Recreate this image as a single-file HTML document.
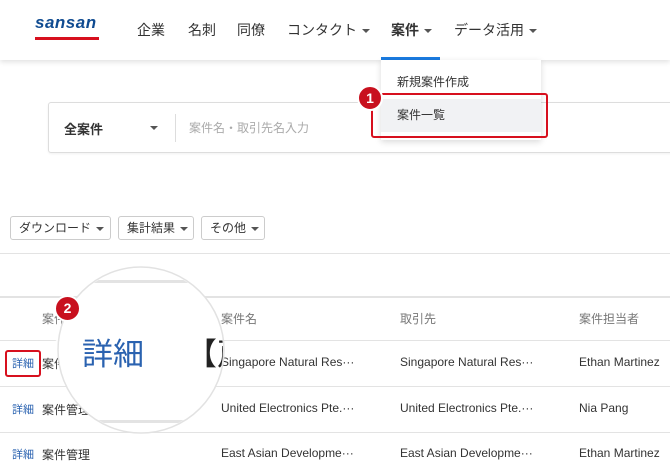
<!DOCTYPE html>
<html><head><meta charset="utf-8"><style>
*{margin:0;padding:0;box-sizing:border-box}
body{width:670px;height:455px;overflow:hidden;background:#fff;font-family:"Liberation Sans","Noto Sans CJK JP",sans-serif;color:#333;position:relative;font-size:12px}
.a{position:absolute;white-space:nowrap}
.hdr{position:absolute;left:0;top:0;width:670px;height:60px;background:#fff;box-shadow:0 2px 5px rgba(0,0,0,.12)}
.nav{font-size:14px;color:#333;top:20px}
.car{display:inline-block;width:0;height:0;border-left:4px solid transparent;border-right:4px solid transparent;border-top:4px solid #555;vertical-align:middle;margin-left:5px}
.btn{position:absolute;top:216px;height:24px;border:1px solid #ccc;border-radius:3px;font-size:12px;line-height:22px;padding-left:8px;color:#333}
.hl{position:absolute;left:0;width:670px;height:1px;background:#e3e3e3}
.blue{color:#2a62b0}
</style></head><body>
<div class="hdr"></div>
<div class="a" style="left:35px;top:13px;font-size:17px;font-weight:bold;font-style:italic;color:#0f4b91;letter-spacing:0.5px">sansan</div>
<div class="a" style="left:35px;top:37px;width:64px;height:3px;background:#d7101e"></div>
<div class="a nav" style="left:137px">企業</div>
<div class="a nav" style="left:188px">名刺</div>
<div class="a nav" style="left:237px">同僚</div>
<div class="a nav" style="left:287px">コンタクト<span class="car"></span></div>
<div class="a nav" style="left:391px;font-weight:bold">案件<span class="car"></span></div>
<div class="a nav" style="left:454px">データ活用<span class="car"></span></div>
<div class="a" style="left:381px;top:57px;width:59px;height:3px;background:#1a7be0"></div>

<div class="a" style="left:48px;top:102px;width:640px;height:51px;border:1px solid #ddd;border-radius:3px;box-shadow:0 1px 2px rgba(0,0,0,.06)"></div>
<div class="a" style="left:64px;top:119px;font-size:13px;font-weight:bold">全案件</div>
<div class="a" style="left:150px;top:126px;border-left:4px solid transparent;border-right:4px solid transparent;border-top:4px solid #555"></div>
<div class="a" style="left:175px;top:114px;width:1px;height:28px;background:#ddd"></div>
<div class="a" style="left:189px;top:119px;font-size:12px;color:#aaa">案件名・取引先名入力</div>

<div class="a" style="left:381px;top:60px;width:160px;height:80px;background:#fff;box-shadow:0 2px 6px rgba(0,0,0,.15)"></div>
<div class="a" style="left:397px;top:73px;font-size:12px">新規案件作成</div>
<div class="a" style="left:381px;top:99px;width:160px;height:33px;background:#f1f2f4"></div>
<div class="a" style="left:397px;top:106px;font-size:12px">案件一覧</div>
<div class="a" style="left:371px;top:93px;width:177px;height:45px;border:2px solid #d7101e;border-radius:3px"></div>
<div class="a" style="left:357px;top:85px;width:26px;height:26px;border-radius:50%;background:#c8101e;border:2px solid #fff;color:#fff;font-weight:bold;font-size:14px;text-align:center;line-height:22px">1</div>

<div class="btn" style="left:10px;width:101px">ダウンロード<span class="car"></span></div>
<div class="btn" style="left:118px;width:76px">集計結果<span class="car"></span></div>
<div class="btn" style="left:201px;width:64px">その他<span class="car"></span></div>
<div class="hl" style="top:253px"></div>
<div class="hl" style="top:296px;height:2px"></div>
<div class="hl" style="top:340px"></div>
<div class="hl" style="top:386px"></div>
<div class="hl" style="top:432px"></div>
<div class="a" style="left:42px;top:310px;color:#777">案件</div>
<div class="a" style="left:221px;top:310px;color:#777">案件名</div>
<div class="a" style="left:400px;top:310px;color:#777">取引先</div>
<div class="a" style="left:579px;top:310px;color:#777">案件担当者</div>

<div class="a blue" style="left:12px;top:355px;font-size:11px">詳細</div>
<div class="a" style="left:42px;top:355px">案件管理</div>
<div class="a" style="left:221px;top:355px">Singapore Natural Res···</div>
<div class="a" style="left:400px;top:355px">Singapore Natural Res···</div>
<div class="a" style="left:579px;top:355px">Ethan Martinez</div>
<div class="a" style="left:5px;top:350px;width:36px;height:27px;border:2px solid #d7101e;border-radius:3px"></div>

<div class="a blue" style="left:12px;top:401px;font-size:11px">詳細</div>
<div class="a" style="left:42px;top:401px">案件管理</div>
<div class="a" style="left:221px;top:401px">United Electronics Pte.···</div>
<div class="a" style="left:400px;top:401px">United Electronics Pte.···</div>
<div class="a" style="left:579px;top:401px">Nia Pang</div>

<div class="a blue" style="left:12px;top:446px;font-size:11px">詳細</div>
<div class="a" style="left:42px;top:446px">案件管理</div>
<div class="a" style="left:221px;top:446px">East Asian Developme···</div>
<div class="a" style="left:400px;top:446px">East Asian Developme···</div>
<div class="a" style="left:579px;top:446px">Ethan Martinez</div>

<svg class="a" style="left:0;top:0" width="670" height="455">
<defs><clipPath id="c"><circle cx="141" cy="350" r="82"/></clipPath></defs>
<path d="M70 330 L46 348 L72 360 Z" fill="#fff"/>
<circle cx="141" cy="350" r="83" fill="#fff" stroke="#e2e2e2" stroke-width="1.5"/>
<g clip-path="url(#c)">
<rect x="50" y="280" width="200" height="3" fill="#e3e3e3"/>
<rect x="50" y="420" width="200" height="3" fill="#e3e3e3"/>
<text x="82" y="365" font-size="31" fill="#2a62b0" font-family="Liberation Sans,Noto Sans CJK JP,sans-serif">詳細</text>
<text x="186" y="365" font-size="31" fill="#222" font-family="Liberation Sans,Noto Sans CJK JP,sans-serif">【戸</text>
</g>
</svg>
<div class="a" style="left:54px;top:295px;width:27px;height:27px;border-radius:50%;background:#c8101e;border:2px solid #fff;color:#fff;font-weight:bold;font-size:14px;text-align:center;line-height:23px">2</div>
</body></html>
